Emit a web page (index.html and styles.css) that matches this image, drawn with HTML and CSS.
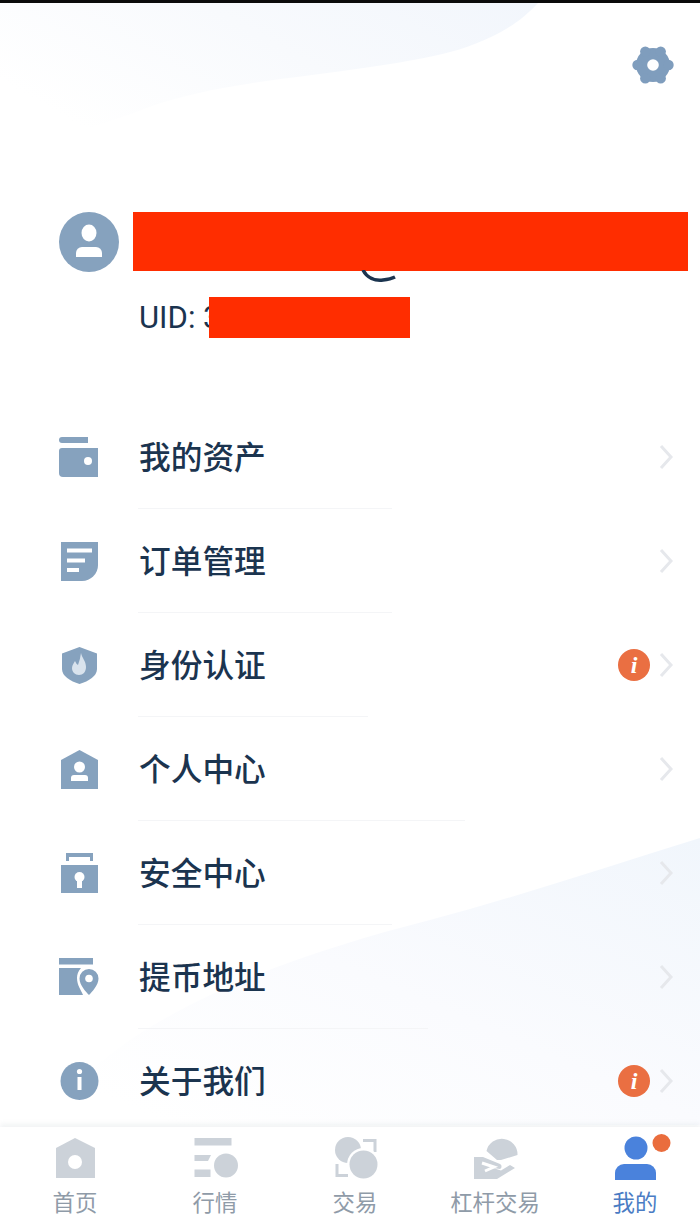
FILE: index.html
```html
<!DOCTYPE html>
<html lang="zh-CN">
<head>
<meta charset="utf-8">
<title>我的</title>
<link rel="stylesheet" href="styles.css">
</head>
<body>
<div class="page">
  <svg class="bg" viewBox="0 0 700 1225" aria-hidden="true">
    <defs>
      <linearGradient id="bgTop" x1="1" y1="0" x2="0" y2="0.5">
        <stop offset="0" stop-color="#f2f6fc"/>
        <stop offset="0.5" stop-color="#f8fafd"/>
        <stop offset="1" stop-color="#ffffff"/>
      </linearGradient>
      <linearGradient id="bgBottom" x1="1" y1="0" x2="0.1" y2="0.9">
        <stop offset="0" stop-color="#f1f6fc"/>
        <stop offset="0.55" stop-color="#fafbfe"/>
        <stop offset="1" stop-color="#ffffff"/>
      </linearGradient>
    </defs>
    <path fill="url(#bgTop)" d="M0 3H538C524 18 510 28 491 37C470 47 450 53 424 58C388 65 350 70 312 75C280 79 250 83 223 88C190 94 160 102 134 113C85 130 40 145 0 157Z"/>
    <path fill="url(#bgBottom)" d="M700 838C610 866 520 896 430 920C320 948 210 986 130 1040C90 1068 60 1095 40 1125H700Z"/>
  </svg>

  <div class="statusbar"></div>

  <header class="topbar">
    <svg class="gear" viewBox="0 0 44 44" aria-label="设置">
      <g class="ic gear-fill">
        <circle cx="22" cy="22" r="17"/>
        <circle cx="37.500" cy="22" r="5.200"/>
        <circle cx="29.700" cy="35.400" r="5.200"/>
        <circle cx="14.300" cy="35.400" r="5.200"/>
        <circle cx="6.500" cy="22" r="5.200"/>
        <circle cx="14.300" cy="8.600" r="5.200"/>
        <circle cx="29.700" cy="8.600" r="5.200"/>
      </g>
      <circle class="knock" cx="22" cy="22" r="5.800"/>
    </svg>
  </header>

  <section class="profile">
    <div class="profile-head">
      <svg class="avatar" viewBox="0 0 60 60" aria-hidden="true">
        <circle class="ic" cx="30" cy="30" r="30"/>
        <ellipse class="knock" cx="30" cy="21" rx="7.500" ry="8.500"/>
        <path class="knock" d="M17 41a6 6 0 0 1 6-6h14a6 6 0 0 1 6 6v4H17Z"/>
      </svg>
      <div class="name-mask">
        <svg class="name-glyph" viewBox="0 0 36 12" aria-hidden="true">
          <path d="M2 0C6 8 14 11 22 10C27 9.500 31 8.500 34 7"/>
        </svg>
      </div>
    </div>
    <div class="uid">UID: 3<span class="uid-mask"></span></div>
  </section>

  <main class="menu">
    <a class="row">
      <svg class="row-icon" viewBox="0 0 40 40"><g class="ic"><path d="M3 0H29V6H3A3 3 0 0 1 3 0Z"/><path d="M3 11H39V40H4A4 4 0 0 1 0 36V14A3 3 0 0 1 3 11Z"/></g><circle class="knock" cx="29" cy="24" r="4"/></svg>
      <span class="row-body w-254"><span class="row-text">我的资产</span></span>
      <svg class="chev" viewBox="0 0 14 26"><path d="M2 2L12 13L2 24"/></svg>
    </a>
    <a class="row">
      <svg class="row-icon" viewBox="0 0 40 40"><path class="ic" d="M2 1H39V24A16 16 0 0 1 23 40H2Z"/><g class="knock"><rect x="8" y="7.500" width="25" height="4"/><rect x="8" y="17.500" width="18" height="4"/><rect x="8" y="27" width="12" height="4"/></g></svg>
      <span class="row-body w-254"><span class="row-text">订单管理</span></span>
      <svg class="chev" viewBox="0 0 14 26"><path d="M2 2L12 13L2 24"/></svg>
    </a>
    <a class="row">
      <svg class="row-icon" viewBox="0 0 40 40"><path class="ic" d="M20.500 2L38 8.500V24C38 31 30 36 20.500 39C11 36 3 31 3 24V8.500Z"/><path class="flame" d="M22 8C23 13 27 16 27 22C27 27 24 30 20 30C16 30 13 27 13 23C13 20 15 18 16 16C17 18 17.500 19 19 20C20.500 16 21.500 12 22 8Z"/></svg>
      <span class="row-body w-230"><span class="row-text">身份认证</span></span>
      <span class="badge">i</span>
      <svg class="chev" viewBox="0 0 14 26"><path d="M2 2L12 13L2 24"/></svg>
    </a>
    <a class="row">
      <svg class="row-icon" viewBox="0 0 40 40"><path class="ic" d="M20.500 1L39 11V40H2V11Z"/><circle class="knock" cx="20.500" cy="18" r="5.500"/><path class="knock" d="M12 29a3 3 0 0 1 3-3h11a3 3 0 0 1 3 3v3H12Z"/></svg>
      <span class="row-body w-327"><span class="row-text">个人中心</span></span>
      <svg class="chev" viewBox="0 0 14 26"><path d="M2 2L12 13L2 24"/></svg>
    </a>
    <a class="row">
      <svg class="row-icon" viewBox="0 0 40 40"><g class="ic"><path d="M7 0H34V8H31V4H10V8H7Z"/><rect x="2" y="12" width="37" height="28"/></g><circle class="knock" cx="20.500" cy="24" r="5"/><rect class="knock" x="18" y="25" width="5" height="10"/></svg>
      <span class="row-body w-254"><span class="row-text">安全中心</span></span>
      <svg class="chev" viewBox="0 0 14 26"><path d="M2 2L12 13L2 24"/></svg>
    </a>
    <a class="row">
      <svg class="row-icon" viewBox="0 0 40 40"><g class="ic"><rect x="0" y="1" width="34" height="6.500"/><path d="M0 11H22C19 14 18 18 18 21C18 28 22 33 24 38H0Z"/><path d="M30 12A9.500 9.500 0 0 1 39.500 21.500C39.500 28 33 35 30 38C27 35 20.500 28 20.500 21.500A9.500 9.500 0 0 1 30 12Z"/></g><circle class="knock" cx="30" cy="21.500" r="3.800"/></svg>
      <span class="row-body w-290"><span class="row-text">提币地址</span></span>
      <svg class="chev" viewBox="0 0 14 26"><path d="M2 2L12 13L2 24"/></svg>
    </a>
    <a class="row">
      <svg class="row-icon" viewBox="0 0 40 40"><circle class="ic" cx="20.500" cy="20" r="19"/><circle class="knock" cx="20.500" cy="10.500" r="2.600"/><rect class="knock" x="18.500" y="16" width="4" height="13"/></svg>
      <span class="row-body"><span class="row-text">关于我们</span></span>
      <span class="badge">i</span>
      <svg class="chev" viewBox="0 0 14 26"><path d="M2 2L12 13L2 24"/></svg>
    </a>
  </main>

  <nav class="tabbar">
    <a class="tab">
      <svg class="tab-icon" viewBox="0 0 60 44"><path class="tab-fill" d="M30 2L50 12V42H11V12Z"/><circle class="knock" cx="30" cy="26" r="7"/></svg>
      <span>首页</span>
    </a>
    <a class="tab">
      <svg class="tab-icon" viewBox="0 0 60 44"><g class="tab-fill"><rect x="9.500" y="2" width="37" height="7.500"/><path d="M9.500 19H26L23 25H9.500Z"/><rect x="9.500" y="33.500" width="16" height="7.500"/><circle cx="41" cy="29.500" r="12"/></g></svg>
      <span>行情</span>
    </a>
    <a class="tab">
      <svg class="tab-icon" viewBox="0 0 60 44"><circle class="tab-fill" cx="23" cy="14" r="13"/><path class="tab-line" d="M38 4.500H50V16"/><path class="tab-line" d="M12 28V39.500H23"/><circle class="knock" cx="38.500" cy="28.500" r="16.500"/><circle class="tab-fill" cx="38.500" cy="28.500" r="14"/></svg>
      <span>交易</span>
    </a>
    <a class="tab">
      <svg class="tab-icon" viewBox="0 0 60 44"><path class="tab-fill" d="M21.500 15A15.700 15.700 0 0 1 52.500 19L36 24H32Z"/><path class="tab-fill" d="M9 21H18L35 28C37 29 37 32 35 33L28 32L36 34.500L45 29L50 32L32 43H9Z"/><path class="tab-cut" d="M17 27L29 31L20 35"/></svg>
      <span>杠杆交易</span>
    </a>
    <a class="tab is-active">
      <svg class="tab-icon" viewBox="0 0 60 44"><g class="tab-blue"><circle cx="31" cy="12" r="11.500"/><path d="M10 37A9 9 0 0 1 19 28H42A9 9 0 0 1 51 37V44H10Z"/></g><circle class="tab-dot" cx="56.500" cy="7" r="9"/></svg>
      <span>我的</span>
    </a>
  </nav>
</div>
</body>
</html>
```
FILE: styles.css
```css
* {
  box-sizing: border-box;
}

html,
body {
  margin: 0;
  padding: 0;
  background: #fff;
}

body {
  font-family: "Noto Sans CJK SC", "Noto Sans", sans-serif;
}

.page {
  position: relative;
  width: 700px;
  height: 1225px;
  overflow: hidden;
  display: flex;
  flex-direction: column;
  background: #fff;
}

.bg {
  position: absolute;
  top: 0;
  left: 0;
  width: 700px;
  height: 1225px;
}

.statusbar {
  position: relative;
  height: 3px;
  flex: none;
  background: #0b0b0b;
}

.topbar {
  position: relative;
  height: 209px;
  flex: none;
  display: flex;
  justify-content: flex-end;
  padding: 40px 25px 0 0;
}

.gear {
  width: 44px;
  height: 44px;
}

.ic {
  fill: #86a2be;
}

.gear-fill {
  fill: #7f9dbd;
}

.knock {
  fill: #fff;
}

.profile {
  position: relative;
  height: 193px;
  flex: none;
  padding-left: 59px;
}

.profile-head {
  display: flex;
  gap: 14px;
  height: 60px;
}

.avatar {
  width: 60px;
  height: 60px;
  flex: none;
}

.name-mask {
  position: relative;
  width: 555px;
  height: 59px;
  background: #ff2d00;
}

.name-glyph {
  position: absolute;
  top: 58px;
  left: 228px;
  width: 36px;
  height: 12px;
  fill: none;
  stroke: #1b344f;
  stroke-width: 3.500;
}

.uid {
  position: relative;
  width: 350px;
  margin: 23px 0 0 80px;
  font-family: Roboto, sans-serif;
  font-size: 31px;
  line-height: 46px;
  color: #1b344f;
}

.uid-mask {
  position: absolute;
  top: 2px;
  left: 70px;
  width: 201px;
  height: 41px;
  background: #ff2d00;
}

.menu {
  position: relative;
  flex: 1;
  min-height: 0;
  overflow: hidden;
}

.row {
  display: flex;
  align-items: center;
  height: 104px;
  padding-left: 59px;
  padding-right: 27px;
}

.row-icon {
  width: 40px;
  height: 40px;
  flex: none;
}

.row-body {
  display: flex;
  align-items: center;
  align-self: stretch;
  flex: none;
  height: 104px;
  margin-left: 39px;
  margin-right: auto;
  padding-bottom: 3px;
  border-bottom: 1px solid #f4f5f7;
  width: 254px;
}

.w-230 {
  width: 230px;
}

.w-254 {
  width: 254px;
}

.w-290 {
  width: 290px;
}

.w-327 {
  width: 327px;
}

.row-text {
  margin-left: 1px;
  font-size: 31.700px;
  font-weight: 500;
  line-height: 44px;
  color: #1b344f;
}

.chev {
  width: 14px;
  height: 26px;
  flex: none;
  fill: none;
  stroke: #e6e8ec;
  stroke-width: 3;
}

.badge {
  width: 32px;
  height: 32px;
  flex: none;
  margin-right: 9px;
  border-radius: 50%;
  background: #ea6f42;
  color: #fff;
  font-family: "Liberation Serif", serif;
  font-size: 24px;
  font-weight: 700;
  font-style: italic;
  line-height: 32px;
  text-align: center;
}

.tabbar {
  position: absolute;
  left: 0;
  right: 0;
  bottom: 0;
  height: 98px;
  display: grid;
  grid-template-columns: repeat(5, 140px);
  padding: 9px 0 0 5px;
  background: #fff;
  box-shadow: 0 -3px 5px rgba(120, 135, 150, 0.1);
}

.tab {
  display: flex;
  flex-direction: column;
  align-items: center;
  font-size: 22.400px;
  line-height: 30px;
  color: #8f9ba8;
}

.tab-icon {
  width: 60px;
  height: 44px;
  margin-bottom: 6px;
  overflow: visible;
  flex: none;
}

.tab-fill {
  fill: #ccd2d9;
}

.tab-line {
  fill: none;
  stroke: #ccd2d9;
  stroke-width: 3;
}

.tab-cut {
  fill: none;
  stroke: #fff;
  stroke-width: 3;
}

.tab-blue {
  fill: #4a82dc;
}

.tab-dot {
  fill: #ea6d3d;
}

.flame {
  fill: #d9e3ed;
}

.is-active {
  color: #4a7cc4;
}
```
